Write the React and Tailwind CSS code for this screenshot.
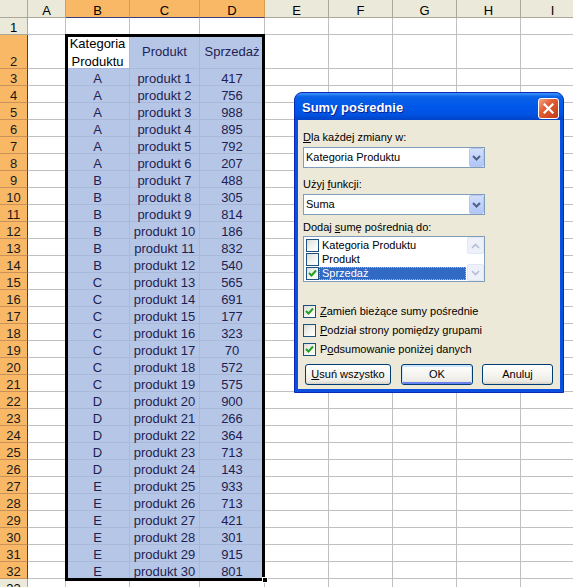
import React from 'react';

const CATS = 'AAAAAABBBBBBCCCCCCCDDDDDEEEEEE'.split('');
const SALES = [417, 756, 988, 895, 792, 207, 488, 305, 814, 186, 832, 540, 565, 691, 177, 323, 70, 572, 575, 900, 266, 364, 713, 143, 933, 713, 421, 301, 915, 801];
const COLS = ['A', 'B', 'C', 'D', 'E', 'F', 'G', 'H', 'I'];
const SELCOLS = ['B', 'C', 'D'];

const HDR = 'flex items-end justify-center leading-[13px] bg-[#ebe9da] border-r border-b border-[#aca899] text-black';
const HDR_SEL = 'flex items-end justify-center leading-[13px] bg-[#f8b866] border-r border-b border-r-[#d59e55] border-b-[#3c3c78] text-black';
const ROWH = 'flex items-end justify-center leading-[13px] bg-[#ebe9da] border-r border-b border-[#aca899] text-black';
const ROWH_SEL = 'flex items-end justify-center leading-[13px] bg-[#f8b866] border-r border-b border-r-[#3c3c78] border-b-[#c9925a] text-[#1a1a1a]';
const CELL = 'flex items-end justify-center leading-[13px] bg-white border-r border-b border-[#c0c0c0]';
const CELL_SEL = 'flex items-end justify-center leading-[13px] bg-[#b6c6e7] border-r border-b border-[#a9b9da] text-[#1e1e52]';

function Sheet() {
  const cells = [];
  cells.push(<div key="corner" className="bg-[#ebe9da] border-r border-b border-[#aca899]" />);
  COLS.forEach((c) => {
    cells.push(
      <div key={'h' + c} className={SELCOLS.includes(c) ? HDR_SEL : HDR}>
        {c}
      </div>
    );
  });
  for (let r = 1; r <= 33; r++) {
    const sel = r >= 2 && r <= 32;
    cells.push(
      <div key={'r' + r} className={sel ? ROWH_SEL : ROWH}>
        {r}
      </div>
    );
    COLS.forEach((c) => {
      const key = c + r;
      if (!sel || !SELCOLS.includes(c)) {
        cells.push(<div key={key} className={CELL} />);
        return;
      }
      if (r === 2) {
        if (c === 'B') {
          cells.push(
            <div key={key} className="bg-white border-r border-b border-[#a9b9da] text-center leading-[18px] text-black">
              Kategoria
              <br />
              Produktu
            </div>
          );
        } else {
          cells.push(
            <div key={key} className="flex items-center justify-center leading-[13px] bg-[#b6c6e7] border-r border-b border-[#a9b9da] text-[#1e1e52]">
              {c === 'C' ? 'Produkt' : 'Sprzedaż'}
            </div>
          );
        }
        return;
      }
      const i = r - 3;
      let txt = '';
      if (c === 'B') txt = CATS[i];
      if (c === 'C') txt = 'produkt ' + (i + 1);
      if (c === 'D') txt = SALES[i];
      cells.push(
        <div key={key} className={CELL_SEL}>
          {txt}
        </div>
      );
    });
  }
  return (
    <div className="grid grid-cols-[28px_38px_64px_70px_65px_64px_64px_64px_64px_64px] grid-rows-[18px_17px_34px_repeat(31,17px)] w-[585px] text-[13px]">
      {cells}
    </div>
  );
}

function Check({ checked }) {
  return (
    <span className="w-[13px] h-[13px] shrink-0 border border-[#1c5180] bg-[linear-gradient(135deg,#dcdcd7_0%,#f4f4f0_55%,#ffffff_100%)] flex items-center justify-center">
      {checked && (
        <svg width="9" height="9" viewBox="0 0 9 9">
          <path d="M1 4 L3.5 6.5 L8 1.5" fill="none" stroke="#21a121" strokeWidth="2" />
        </svg>
      )}
    </span>
  );
}

function Combo({ text }) {
  return (
    <div className="w-[182px] h-[21px] border border-[#7f9db9] bg-white flex items-center">
      <span className="flex-1 pl-[2px] leading-[13px]">{text}</span>
      <span className="w-[15px] h-[19px] flex items-center justify-center rounded-[2px] border border-[#b7c7ef] bg-[linear-gradient(to_bottom,#d2defc_0%,#c1d2fb_50%,#b1c6f6_100%)]">
        <svg width="9" height="6" viewBox="0 0 9 6">
          <path d="M1 1 L4.5 4.5 L8 1" fill="none" stroke="#4d6185" strokeWidth="2" />
        </svg>
      </span>
    </div>
  );
}

function ListItem({ label, checked, active }) {
  return (
    <div className="h-[14px] flex items-center pl-[2px]">
      <Check checked={checked} />
      {active ? (
        <span className="flex-1 h-[13px] flex items-center pl-[2px] bg-[#316ac5] text-white leading-[13px] border border-dotted border-[#9fb8ea]">
          {label}
        </span>
      ) : (
        <span className="flex-1 pl-[3px] leading-[13px]">{label}</span>
      )}
    </div>
  );
}

function ScrollBtn({ up }) {
  return (
    <div className="h-[17px] flex items-center justify-center rounded-[2px] border border-[#e1e7f5] bg-[#eef1f9]">
      <svg width="9" height="6" viewBox="0 0 9 6">
        <path d={up ? 'M1 5 L4.5 1.5 L8 5' : 'M1 1 L4.5 4.5 L8 1'} fill="none" stroke="#b4bdd1" strokeWidth="1.6" />
      </svg>
    </div>
  );
}

function Dialog() {
  return (
    <div className="absolute left-[294px] top-[92px] w-[270px] h-[301px] rounded-t-[8px] border border-[#0a2ab5] bg-[#0b4fe0] flex flex-col overflow-hidden font-['Liberation_Sans',Arial,sans-serif] text-[11px] text-black">
      <div className="h-[27px] shrink-0 flex items-center justify-between pl-[7px] pr-[4px] bg-[linear-gradient(to_bottom,#3d95ff_0%,#0a62e5_14%,#0058ea_50%,#0052e2_80%,#0043c6_100%)]">
        <span className="text-white font-bold text-[13px] leading-[15px] pt-[1px] [text-shadow:1px_1px_0_#0a1e8a]">Sumy pośrednie</span>
        <span className="w-[21px] h-[21px] mt-[3px] rounded-[3px] border border-white flex items-center justify-center bg-[linear-gradient(135deg,#f0a58a_0%,#e35d35_40%,#c23a14_100%)]">
          <svg width="11" height="11" viewBox="0 0 11 11">
            <path d="M1.5 1.5 L9.5 9.5 M9.5 1.5 L1.5 9.5" stroke="white" strokeWidth="2.2" strokeLinecap="square" />
          </svg>
        </span>
      </div>
      <div className="flex-1 px-[3px] pb-[3px] flex">
        <div className="flex-1 bg-[#ece9d8] flex flex-col pl-[5px] pt-[11px]">
          <div className="leading-[13px]">
            <span className="underline">D</span>la każdej zmiany w:
          </div>
          <div className="mt-[3px]">
            <Combo text="Kategoria Produktu" />
          </div>
          <div className="leading-[13px] mt-[10px]">
            Użyj <span className="underline">f</span>unkcji:
          </div>
          <div className="mt-[3px]">
            <Combo text="Suma" />
          </div>
          <div className="leading-[13px] mt-[6px]">
            Dodaj <span className="underline">s</span>umę pośrednią do:
          </div>
          <div className="mt-[2px] w-[182px] h-[46px] border border-[#7f9db9] bg-white flex">
            <div className="flex-1 pt-[1px] pr-[1px]">
              <ListItem label="Kategoria Produktu" />
              <ListItem label="Produkt" />
              <ListItem label="Sprzedaż" checked active />
            </div>
            <div className="w-[17px] flex flex-col justify-between">
              <ScrollBtn up />
              <ScrollBtn />
            </div>
          </div>
          <div className="mt-[20px] h-[19px] flex items-center">
            <Check checked />
            <span className="ml-[4px] leading-[13px]">
              <span className="underline">Z</span>amień bieżące sumy pośrednie
            </span>
          </div>
          <div className="h-[19px] flex items-center">
            <Check />
            <span className="ml-[4px] leading-[13px]">
              <span className="underline">P</span>odział strony pomiędzy grupami
            </span>
          </div>
          <div className="h-[19px] flex items-center">
            <Check checked />
            <span className="ml-[4px] leading-[13px]">
              P<span className="underline">o</span>dsumowanie poniżej danych
            </span>
          </div>
          <div className="mt-[5px] ml-[2px] flex">
            <div className="w-[86px] h-[21px] rounded-[3px] border border-[#003c74] flex items-center justify-center leading-[13px] bg-[linear-gradient(to_bottom,#ffffff_0%,#f5f4ef_50%,#ecebe4_85%,#d6d0c5_100%)]">
              <span>
                <span className="underline">U</span>suń wszystko
              </span>
            </div>
            <div className="ml-[10px] w-[72px] h-[21px] rounded-[3px] border border-[#003c74] flex items-center justify-center leading-[13px] bg-[linear-gradient(to_bottom,#ffffff_0%,#f5f4ef_50%,#ecebe4_85%,#d6d0c5_100%)] shadow-[inset_0_1px_0_1px_#cee7ff,inset_0_-1px_0_1px_#6982ee]">
              OK
            </div>
            <div className="ml-[9px] w-[71px] h-[21px] rounded-[3px] border border-[#003c74] flex items-center justify-center leading-[13px] bg-[linear-gradient(to_bottom,#ffffff_0%,#f5f4ef_50%,#ecebe4_85%,#d6d0c5_100%)]">
              Anuluj
            </div>
          </div>
        </div>
      </div>
    </div>
  );
}

export default function App() {
  return (
    <div className="relative w-[573px] h-[587px] overflow-hidden bg-white font-['Liberation_Sans',Arial,sans-serif] text-black">
      <Sheet />
      <div className="absolute left-[65px] top-[34px] w-[200px] h-[547px] border-[3px] border-black pointer-events-none" />
      <div className="absolute left-[262px] top-[577px] w-[6px] h-[6px] bg-black border border-white pointer-events-none" />
      <Dialog />
    </div>
  );
}
